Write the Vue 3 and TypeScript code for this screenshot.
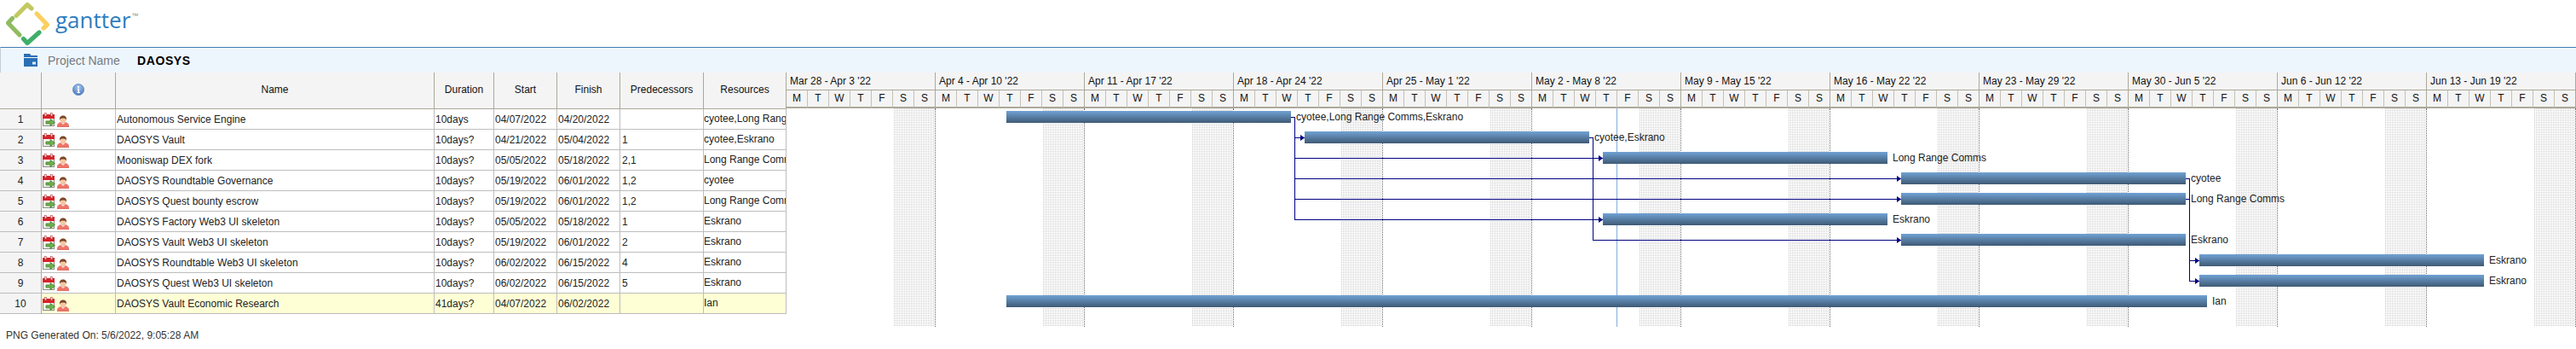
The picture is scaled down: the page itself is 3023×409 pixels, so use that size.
<script setup lang="ts">
interface Task {
  id: number; name: string; duration: string; start: string; finish: string;
  pred: string; res: string; from: number; to: number;
}
const tasks: Task[] = [
  { id: 1, name: 'Autonomous Service Engine', duration: '10days', start: '04/07/2022', finish: '04/20/2022', pred: '', res: 'cyotee,Long Range Comms,Eskrano', from: 10, to: 23 },
  { id: 2, name: 'DAOSYS Vault', duration: '10days?', start: '04/21/2022', finish: '05/04/2022', pred: '1', res: 'cyotee,Eskrano', from: 24, to: 37 },
  { id: 3, name: 'Mooniswap DEX fork', duration: '10days?', start: '05/05/2022', finish: '05/18/2022', pred: '2,1', res: 'Long Range Comms', from: 38, to: 51 },
  { id: 4, name: 'DAOSYS Roundtable Governance', duration: '10days?', start: '05/19/2022', finish: '06/01/2022', pred: '1,2', res: 'cyotee', from: 52, to: 65 },
  { id: 5, name: 'DAOSYS Quest bounty escrow', duration: '10days?', start: '05/19/2022', finish: '06/01/2022', pred: '1,2', res: 'Long Range Comms', from: 52, to: 65 },
  { id: 6, name: 'DAOSYS Factory Web3 UI skeleton', duration: '10days?', start: '05/05/2022', finish: '05/18/2022', pred: '1', res: 'Eskrano', from: 38, to: 51 },
  { id: 7, name: 'DAOSYS Vault Web3 UI skeleton', duration: '10days?', start: '05/19/2022', finish: '06/01/2022', pred: '2', res: 'Eskrano', from: 52, to: 65 },
  { id: 8, name: 'DAOSYS Roundtable Web3 UI skeleton', duration: '10days?', start: '06/02/2022', finish: '06/15/2022', pred: '4', res: 'Eskrano', from: 66, to: 79 },
  { id: 9, name: 'DAOSYS Quest Web3 UI skeleton', duration: '10days?', start: '06/02/2022', finish: '06/15/2022', pred: '5', res: 'Eskrano', from: 66, to: 79 },
  { id: 10, name: 'DAOSYS Vault Economic Research', duration: '41days?', start: '04/07/2022', finish: '06/02/2022', pred: '', res: 'Ian', from: 10, to: 66 },
]
const weeks = [
  "Mar 28 - Apr 3 '22", "Apr 4 - Apr 10 '22", "Apr 11 - Apr 17 '22", "Apr 18 - Apr 24 '22",
  "Apr 25 - May 1 '22", "May 2 - May 8 '22", "May 9 - May 15 '22", "May 16 - May 22 '22",
  "May 23 - May 29 '22", "May 30 - Jun 5 '22", "Jun 6 - Jun 12 '22", "Jun 13 - Jun 19 '22",
]
const dayLetters = ['M', 'T', 'W', 'T', 'F', 'S', 'S']
const DAY = 25
const startX = (d: number) => d * DAY + 8
const endX = (d: number) => d * DAY + 17
const rowTop = (i: number) => 3 + i * 24
const rowMid = (i: number) => 10.5 + i * 24
const arrow = (x: number, y: number) => `${x - 5},${y - 3.5} ${x},${y} ${x - 5},${y + 3.5}`

// Dependency connectors, in the chart's own coordinates
const x1 = endX(23) + 4.5
const x2 = endX(37) + 4.5
const x3 = endX(65) + 4.5
const links = [
  `M${endX(23)} ${rowMid(0)}H${x1}V${rowMid(5)}H${startX(38)}`,
  `M${x1} ${rowMid(1)}H${startX(24)}`,
  `M${x1} ${rowMid(2)}H${startX(38)}`,
  `M${x1} ${rowMid(3)}H${startX(52)}`,
  `M${x1} ${rowMid(4)}H${startX(52)}`,
  `M${endX(37)} ${rowMid(1)}H${x2}V${rowMid(6)}H${startX(52)}`,
  `M${x2} ${rowMid(2)}H${startX(38)}`,
  `M${endX(65)} ${rowMid(3)}H${x3}V${rowMid(8)}H${startX(66)}`,
  `M${endX(65)} ${rowMid(4)}H${x3}`,
  `M${x3} ${rowMid(7)}H${startX(66)}`,
]
const arrows = [
  arrow(startX(24), rowMid(1)), arrow(startX(38), rowMid(2)), arrow(startX(52), rowMid(3)),
  arrow(startX(52), rowMid(4)), arrow(startX(38), rowMid(5)), arrow(startX(52), rowMid(6)),
  arrow(startX(66), rowMid(7)), arrow(startX(66), rowMid(8)),
]
</script>

<template>
  <div class="page">
    <header class="brand">
      <svg class="logo" width="60" height="55" viewBox="0 0 60 55" fill="none" stroke-width="5.2" stroke-linecap="round" stroke-linejoin="round">
        <path d="M19 18.5 32 5.5 37 10" stroke="#c3c862" />
        <path d="M43 16 55.5 29 51 33" stroke="#fbcf5f" />
        <path d="M46 38 32 50.5 27.5 45.5" stroke="#3fae69" />
        <path d="M23 41 9.5 27 14.5 21.5" stroke="#8fbc60" />
      </svg>
      <span class="wordmark">gantter</span><span class="tm">™</span>
    </header>

    <div class="project">
      <svg class="folder" width="16" height="15" viewBox="0 0 16 15">
        <path d="M0 0H7L8.5 2H16V4H0Z" fill="#2a6fb5" />
        <rect y="5" width="16" height="10" fill="#2a6fb5" />
        <rect x="10" y="9.5" width="4" height="3" fill="#dfe9f3" />
      </svg>
      <span class="project-label">Project Name</span>
      <span class="project-name">DAOSYS</span>
    </div>

    <main class="board">
      <table class="grid">
        <colgroup>
          <col style="width: 49px" /><col style="width: 87px" /><col style="width: 374px" /><col style="width: 70px" />
          <col style="width: 74px" /><col style="width: 74px" /><col style="width: 98px" /><col style="width: 97px" />
        </colgroup>
        <thead>
          <tr>
            <th></th>
            <th>
              <svg class="info" width="14" height="14" viewBox="0 0 14 14">
                <defs>
                  <radialGradient id="infoFill" cx="0.5" cy="0.3" r="0.8">
                    <stop offset="0" stop-color="#a9c8ee" />
                    <stop offset="1" stop-color="#3d70b8" />
                  </radialGradient>
                </defs>
                <circle cx="7" cy="7" r="6.6" fill="url(#infoFill)" stroke="#5b83bb" stroke-width="0.7" />
                <circle cx="7" cy="3.8" r="1.1" fill="#fff" />
                <path d="M5.8 5.8H8V10H9V11H5.4V10H6.4V6.8H5.8Z" fill="#fff" />
              </svg>
            </th>
            <th>Name</th><th>Duration</th><th>Start</th><th>Finish</th><th>Predecessors</th><th>Resources</th>
          </tr>
        </thead>
        <tbody>
          <tr v-for="t in tasks" :key="t.id" :class="{ selected: t.id === 10 }">
            <td class="num">{{ t.id }}</td>
            <td class="icons">
              <div class="icon-pair">
                <svg width="15" height="16" viewBox="0 0 15 16">
                  <rect x="0.5" y="2.5" width="13" height="13" fill="#f6f6f0" stroke="#8b8b85" />
                  <rect x="0" y="2" width="14" height="5" fill="#d9202a" />
                  <rect x="2.5" y="0.5" width="2" height="3.5" fill="#e8e8e8" stroke="#a33" stroke-width="0.5" />
                  <rect x="9.5" y="0.5" width="2" height="3.5" fill="#e8e8e8" stroke="#a33" stroke-width="0.5" />
                  <path d="M4 10H9V7.5L14.5 11.5 9 15.5V13H4Z" fill="#6fb04a" stroke="#3f7f2d" stroke-width="0.8" />
                </svg>
                <svg class="person" width="14" height="14" viewBox="0 0 14 14">
                  <path d="M0 14C0 10 2.5 8.6 4.5 8.4H9.5C11.5 8.6 14 10 14 14Z" fill="#ee7468" stroke="#d4574e" stroke-width="0.5" />
                  <circle cx="7" cy="5" r="3.6" fill="#f4c7a2" />
                  <path d="M3 6C2.4 2 4.6 0.5 7 0.5S11.6 2 11 6C10.4 4 9.6 3.4 7 3.4S3.6 4 3 6Z" fill="#7b4526" />
                  <path d="M4 8.5 7 11 10 8.5" fill="#f8dcc6" />
                </svg>
              </div>
            </td>
            <td class="text">{{ t.name }}</td>
            <td class="text">{{ t.duration }}</td>
            <td class="date">{{ t.start }}</td>
            <td class="date">{{ t.finish }}</td>
            <td class="pred">{{ t.pred }}</td>
            <td class="res">{{ t.res }}</td>
          </tr>
        </tbody>
      </table>

      <section class="chart">
        <div class="weeks">
          <div v-for="w in weeks" :key="w" class="week">
            <div class="week-title">{{ w }}</div>
            <div class="days">
              <div v-for="(d, i) in dayLetters" :key="i" class="day">{{ d }}</div>
            </div>
          </div>
        </div>
        <div class="timeline">
          <template v-for="(w, k) in weeks" :key="w">
            <div class="weekend" :style="{ left: k * 175 + 125 + 'px' }"></div>
            <div class="week-line" :style="{ left: k * 175 + 174 + 'px' }"></div>
          </template>
          <div class="today"></div>
          <svg class="links" width="2100" height="256" viewBox="0 0 2100 256">
            <path v-for="(d, i) in links" :key="i" :d="d" fill="none" stroke="#000080" stroke-width="1" shape-rendering="crispEdges" />
            <polygon v-for="(p, i) in arrows" :key="i" :points="p" fill="#000080" />
          </svg>
          <template v-for="(t, i) in tasks" :key="t.id">
            <div class="bar" :style="{ left: startX(t.from) + 'px', top: rowTop(i) + 'px', width: endX(t.to) - startX(t.from) + 'px' }"></div>
            <div class="bar-label" :style="{ left: endX(t.to) + 6 + 'px', top: rowTop(i) + 'px' }">{{ t.res }}</div>
          </template>
        </div>
      </section>
    </main>

    <footer class="stamp">PNG Generated On: 5/6/2022, 9:05:28 AM</footer>
  </div>
</template>

<style scoped>
.page {
  width: 3023px;
  height: 409px;
  overflow: hidden;
  background: #fff;
  font-family: "Liberation Sans", Arial, sans-serif;
  font-size: 12px;
  color: #222;
}
.brand {
  display: flex;
  align-items: flex-start;
  height: 55px;
}
.logo { flex: none; margin-right: 5px; }
.wordmark {
  font-family: "Open Sans", sans-serif;
  font-size: 26px;
  line-height: 36px;
  margin-top: 5px;
  color: #2d7dbf;
}
.tm {
  font-size: 8px;
  line-height: 8px;
  margin: 15px 0 0 1px;
  color: #888;
}
.project {
  display: flex;
  align-items: center;
  height: 30px;
  padding-left: 27px;
  box-sizing: border-box;
  background: #eef6fd;
  border-top: 1px solid #3f7cb3;
  border-left: 1px solid #c5ccd2;
  font-size: 14px;
}
.folder { flex: none; margin-right: 12px; }
.project-label { color: #757a80; width: 105px; }
.project-name { font-weight: 700; color: #000; letter-spacing: 0.6px; }
.board { display: flex; align-items: flex-start; }
.grid {
  flex: none;
  width: 923px;
  table-layout: fixed;
  border-collapse: separate;
  border-spacing: 0;
}
.grid th {
  height: 43px;
  padding: 0;
  box-sizing: border-box;
  background: #f4f4f4;
  font-weight: 400;
  color: #111;
  border-right: 1px solid #aca899;
  border-bottom: 1px solid #aca899;
  padding-bottom: 2px;
}
.info { display: block; margin: 0 auto; }
.grid td {
  height: 24px;
  padding: 0 0 0 1px;
  box-sizing: border-box;
  border-right: 1px solid #bdbdbd;
  border-bottom: 1px solid #bdbdbd;
  white-space: nowrap;
  overflow: hidden;
  vertical-align: middle;
}
.grid .num {
  background: #f4f4f4;
  text-align: center;
  padding: 0;
  border-right-color: #aca899;
}
.grid .icons { padding: 0; vertical-align: top; }
.icon-pair { display: flex; gap: 2px; padding: 4px 0 0 1px; }
.person { margin-top: 3px; }
.grid .date { padding-left: 1px; }
.grid .pred { padding-left: 2px; }
.grid .res { padding: 0 0 2px 0; }
.selected td { background: #ffffd6; }
.selected .num { background: #f4f4f4; }
.chart { flex: none; width: 2100px; }
.weeks { display: flex; height: 42px; background: #f4f4f4; }
.week {
  flex: none;
  width: 175px;
  box-sizing: border-box;
  border-right: 1px solid #aca899;
}
.week-title {
  height: 21px;
  line-height: 20px;
  box-sizing: border-box;
  padding-left: 4px;
  border-bottom: 1px solid #aca899;
  color: #111;
}
.days { display: flex; height: 21px; }
.day {
  flex: none;
  width: 25px;
  box-sizing: border-box;
  text-align: center;
  line-height: 19px;
  color: #111;
  border-right: 1px solid #c4c1b6;
  border-bottom: 2px solid #aca899;
}
.day:last-child { width: 24px; border-right: 0; }
.timeline { position: relative; height: 256px; }
.weekend {
  position: absolute;
  top: 0;
  width: 49px;
  height: 256px;
  background: conic-gradient(#c4c4c4 25%, #fff 0) 0 0 / 2px 2px;
}
.week-line {
  position: absolute;
  top: 0;
  height: 256px;
  border-left: 1px dotted #666;
}
.today {
  position: absolute;
  top: 0;
  left: 974px;
  width: 1px;
  height: 256px;
  background: #80aede;
}
.links { position: absolute; top: 0; left: 0; }
.bar {
  position: absolute;
  height: 14px;
  background: linear-gradient(#71a2d4, #3f5a75);
}
.bar-label {
  position: absolute;
  line-height: 14px;
  white-space: nowrap;
  color: #222;
}
.stamp {
  padding: 3px 0 0 7px;
  line-height: 14px;
  color: #333;
}
</style>

<style>
html, body { margin: 0; background: #fff; }
</style>
